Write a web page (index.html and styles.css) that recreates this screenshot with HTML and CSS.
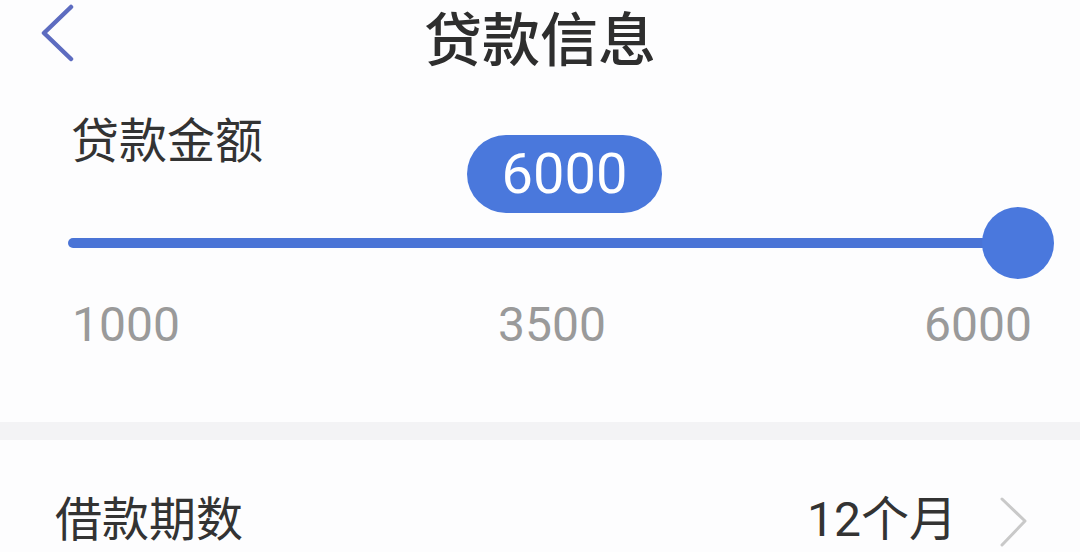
FILE: index.html
```html
<!DOCTYPE html>
<html lang="zh-CN">
<head>
<meta charset="utf-8">
<title>贷款信息</title>
<link rel="stylesheet" href="styles.css">
</head>
<body>
<div class="page">
  <header class="nav">
    <div class="nav-left">
      <svg class="back" width="40" height="60" viewBox="0 0 40 60" aria-hidden="true">
        <polyline points="31,5 4,31 31,57" fill="none" stroke="#5d6cc0" stroke-width="4.5" stroke-linecap="round" stroke-linejoin="round"/>
      </svg>
    </div>
    <h1 class="title">贷款信息</h1>
    <div class="nav-right"></div>
  </header>

  <section class="amount">
    <div class="label">贷款金额</div>
    <div class="slider">
      <div class="bubble">6000</div>
      <div class="track"></div>
      <div class="thumb"></div>
    </div>
    <div class="ticks">
      <span>1000</span>
      <span>3500</span>
      <span>6000</span>
    </div>
  </section>

  <div class="gap"></div>

  <div class="row">
    <span class="row-label">借款期数</span>
    <span class="row-value">12个月
      <svg class="more" width="30" height="52" viewBox="0 0 30 52" aria-hidden="true">
        <polyline points="4,3 27,25 4,49" fill="none" stroke="#c9c9c9" stroke-width="3" stroke-linecap="round" stroke-linejoin="round"/>
      </svg>
    </span>
  </div>
</div>
</body>
</html>
```

FILE: styles.css
```css
html, body {
  margin: 0;
  padding: 0;
  background: #fdfdfe;
}

.page {
  width: 1080px;
  height: 552px;
  overflow: hidden;
  font-family: "Roboto", "Noto Sans CJK SC", sans-serif;
  color: #333333;
  background: #fdfdfe;
}

.nav {
  height: 75px;
  display: grid;
  grid-template-columns: 1fr auto 1fr;
  align-items: start;
}

.nav-left {
  padding-left: 40px;
  padding-top: 2px;
  display: flex;
  align-items: flex-start;
}

.back {
  display: block;
}

.title {
  margin: 0;
  font-family: "Noto Sans CJK SC", sans-serif;
  font-size: 58px;
  font-weight: 500;
  line-height: 73px;
  color: #2e2e2e;
}

.amount {
  height: 309px;
  padding: 38px 26px 0 68px;
}

.label {
  margin-left: 3px;
  font-family: "Noto Sans CJK SC", sans-serif;
  font-size: 48px;
  line-height: 1;
  color: #333333;
}

.slider {
  position: relative;
  margin-top: 46px;
  height: 72px;
  display: flex;
  align-items: center;
}

.track {
  flex: 1;
  height: 10px;
  border-radius: 5px;
  background: #4a74d6;
  margin-right: -36px;
}

.thumb {
  width: 72px;
  height: 72px;
  border-radius: 50%;
  background: #4a78dd;
}

.bubble {
  position: absolute;
  left: 399px;
  top: -72px;
  width: 195px;
  height: 78px;
  border-radius: 39px;
  background: #4a78dc;
  color: #ffffff;
  font-size: 56px;
  line-height: 78px;
  text-align: center;
}

.ticks {
  margin-top: 22px;
  padding: 0 22px 0 4px;
  display: flex;
  justify-content: space-between;
  font-size: 48px;
  line-height: 1;
  color: #9a9a9a;
}

.gap {
  height: 18px;
  background: #f3f3f5;
}

.row {
  height: 112px;
  box-sizing: border-box;
  padding: 52px 52px 0 55px;
  display: flex;
  align-items: flex-start;
  justify-content: space-between;
}

.row-label {
  font-family: "Noto Sans CJK SC", sans-serif;
  font-size: 47px;
  line-height: 1;
  color: #333333;
}

.row-value {
  display: flex;
  align-items: center;
  gap: 41px;
  font-size: 48px;
  line-height: 1;
  color: #333333;
}

.more {
  display: block;
  margin-top: 4px;
}
```
